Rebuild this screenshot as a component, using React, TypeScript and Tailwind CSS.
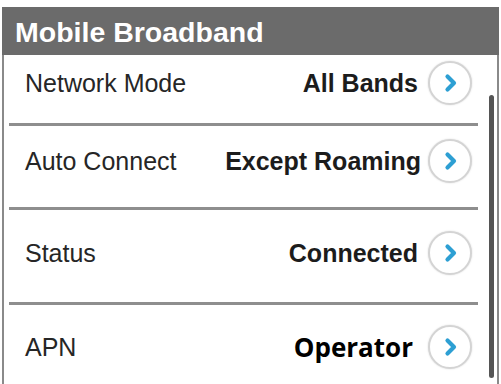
import React from "react";

function Chevron() {
  return (
    <div className="flex h-[44px] w-[44px] shrink-0 items-center justify-center rounded-full border-2 border-[#d4d4d4] bg-white shadow-[0_0_2px_rgba(0,0,0,0.15)]">
      <svg width="14" height="20" viewBox="0 0 14 20" className="ml-[2px]">
        <path d="M3.5 3.5 L10 10 L3.5 16.5" fill="none" stroke="#2d9fd3" strokeWidth="4.2" strokeLinecap="round" strokeLinejoin="round" />
      </svg>
    </div>
  );
}

type RowProps = {
  label: string;
  value: string;
  h: string;
  pb: string;
  valueClass: string;
  gap: string;
};

function Row({ label, value, h, pb, valueClass, gap }: RowProps) {
  return (
    <div className={`flex items-center pl-[21px] pr-[25px] ${h} ${pb}`}>
      <span className="text-[25px] text-[#262626] [font-family:'Liberation_Sans',Arial,sans-serif] leading-none">
        {label}
      </span>
      <div className={`ml-auto flex items-center ${gap}`}>
        <span className={valueClass}>{value}</span>
        <Chevron />
      </div>
    </div>
  );
}

function Divider() {
  return <div className="ml-[5px] mr-[19px] h-[3px] bg-[#8e8e8e]" />;
}

export default function App() {
  const bold = "text-[25px] font-bold text-[#1c1c1c] [font-family:'Liberation_Sans',Arial,sans-serif] leading-none";
  return (
    <div className="relative h-[384px] w-[501px] overflow-hidden bg-white pt-[7px] pl-[2px] pr-[2px]">
      <div className="h-full border-l-2 border-r-2 border-[#8a8a8a] bg-white">
        <div className="-ml-[2px] -mr-[2px] flex h-[48px] items-center bg-[#6b6b6b] pl-[13px] pt-[3px]">
          <span className="text-[28.5px] font-bold leading-none text-white [font-family:'Liberation_Sans',Arial,sans-serif]">
            Mobile Broadband
          </span>
        </div>
        <Row label="Network Mode" value="All Bands" h="h-[68px]" pb="pb-[12px]" valueClass={bold} gap="gap-[10px]" />
        <Divider />
        <Row label="Auto Connect" value="Except Roaming" h="h-[81px]" pb="pb-[11px]" valueClass={bold} gap="gap-[7px]" />
        <Divider />
        <Row label="Status" value="Connected" h="h-[92px]" pb="pb-[6px]" valueClass={bold} gap="gap-[10px]" />
        <Divider />
        <Row
          label="APN"
          value="Operator"
          h="h-[100px]"
          pb="pb-[16px]"
          valueClass="text-[26px] font-bold text-black leading-none [font-family:'Open_Sans',sans-serif]"
          gap="gap-[15px]"
        />
      </div>
      <div className="absolute left-[489px] top-[95px] h-[283px] w-[5px] rounded-full bg-[#555555]" />
    </div>
  );
}
